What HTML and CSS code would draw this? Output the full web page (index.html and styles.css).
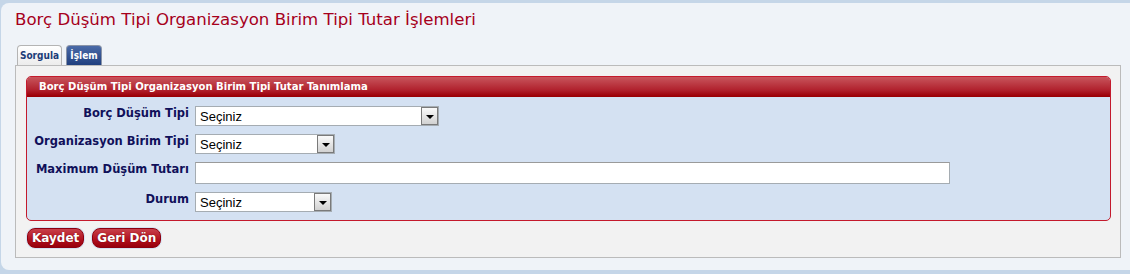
FILE: index.html
```html
<!DOCTYPE html>
<html>

<head>
    <title>Borç Düşüm Tipi Organizasyon Birim Tipi Tutar İşlemleri</title>
    <link rel="stylesheet" href="styles.css">
</head>

<body>
    <div class="page">
        <h1 class="page-title">Borç Düşüm Tipi Organizasyon Birim Tipi Tutar İşlemleri</h1>

        <div class="tabs">
            <div class="tab">Sorgula</div>
            <div class="tab tab-active">İşlem</div>
        </div>

        <div class="tab-panel">
            <div class="form-box">
                <div class="form-box-header">Borç Düşüm Tipi Organizasyon Birim Tipi Tutar Tanımlama</div>
                <div class="form-box-body">
                    <div class="form-row">
                        <label class="form-label">Borç Düşüm Tipi</label>
                        <div class="select-box select-wide">
                            <select class="select-input">
                                <option>Seçiniz</option>
                            </select>
                            <span class="select-arrow"><span class="triangle"></span></span>
                        </div>
                    </div>
                    <div class="form-row">
                        <label class="form-label">Organizasyon Birim Tipi</label>
                        <div class="select-box select-mid">
                            <select class="select-input">
                                <option>Seçiniz</option>
                            </select>
                            <span class="select-arrow"><span class="triangle"></span></span>
                        </div>
                    </div>
                    <div class="form-row">
                        <label class="form-label">Maximum Düşüm Tutarı</label>
                        <input type="text" class="text-input">
                    </div>
                    <div class="form-row">
                        <label class="form-label">Durum</label>
                        <div class="select-box select-small">
                            <select class="select-input">
                                <option>Seçiniz</option>
                            </select>
                            <span class="select-arrow"><span class="triangle"></span></span>
                        </div>
                    </div>
                </div>
            </div>

            <div class="button-bar">
                <button class="red-button">Kaydet</button>
                <button class="red-button">Geri Dön</button>
            </div>
        </div>
    </div>
</body>

</html>
```

FILE: styles.css
```css
body {
    margin: 0;
    background-color: #c5d6e8;
    font-family: "DejaVu Sans", Verdana, sans-serif;
}

.page {
    margin-top: 3px;
    margin-left: 1px;
    height: 267px;
    padding: 7px 10px 0 14px;
    background-color: #eff3f8;
    border-radius: 8px 0 0 8px;
    box-sizing: border-box;
}

.page-title {
    margin: 0;
    font-size: 16.6px;
    font-weight: normal;
    color: #a6001c;
    line-height: 20px;
}

.tabs {
    display: flex;
    gap: 4px;
    margin-top: 15px;
    margin-left: 2px;
    height: 20px;
}

.tab {
    width: 45px;
    height: 20px;
    box-sizing: border-box;
    border: 1px solid #b4b4b4;
    border-bottom: none;
    border-radius: 4px 4px 0 0;
    background: linear-gradient(#ffffff, #ececec);
    color: #1c3c78;
    font-family: "DejaVu Sans Condensed", Tahoma, sans-serif;
    font-size: 10px;
    font-weight: bold;
    text-align: center;
    line-height: 19px;
}

.tab-active {
    width: 36px;
    border-color: #8a94a8;
    background: linear-gradient(#4a6aa8, #203f7e);
    color: #ffffff;
}

.tab-panel {
    width: 1106px;
    box-sizing: border-box;
    border: 1px solid #bbbbbb;
    background-color: #f2f2f2;
    padding: 10px 9px 9px 10px;
}

.form-box {
    border: 1px solid #c41a2c;
    border-radius: 5px;
    background-color: #d4e1f2;
    overflow: hidden;
}

.form-box-header {
    height: 20px;
    padding-left: 12px;
    background: linear-gradient(#c8555c, #b0202c 70%, #9c0008);
    border-bottom: 1px solid #9a0006;
    box-sizing: border-box;
    color: #ffffff;
    font-family: "DejaVu Sans Condensed", Tahoma, sans-serif;
    font-size: 11.2px;
    font-weight: bold;
    line-height: 19px;
}

.form-box-body {
    display: flex;
    flex-direction: column;
    gap: 8px;
    padding: 9px 0 8px 0;
}

.form-row {
    display: flex;
    align-items: flex-start;
    gap: 6px;
}

.form-label {
    width: 162px;
    text-align: right;
    color: #10105a;
    font-size: 11.5px;
    font-weight: bold;
    line-height: 13px;
    padding-top: 1px;
}

.select-box {
    display: flex;
    height: 20px;
    box-sizing: border-box;
    border: 1px solid #a5acb2;
    background-color: #ffffff;
}

.select-wide {
    width: 244px;
}

.select-mid {
    width: 140px;
}

.select-small {
    width: 137px;
}

.select-input {
    flex: 1;
    min-width: 0;
    appearance: none;
    border: none;
    outline: none;
    background: transparent;
    padding: 0 0 0 4px;
    font-family: "Liberation Sans", Arial, sans-serif;
    font-size: 13px;
    color: #000000;
}

.select-arrow {
    width: 17px;
    height: 18px;
    box-sizing: border-box;
    border: 1px solid #7a7a7a;
    background: linear-gradient(#fafafa, #d2d2d2);
    display: flex;
    align-items: center;
    justify-content: center;
}

.triangle {
    width: 0;
    height: 0;
    margin-top: 2px;
    border-left: 4px solid transparent;
    border-right: 4px solid transparent;
    border-top: 4px solid #000000;
}

.text-input {
    width: 755px;
    height: 22px;
    box-sizing: border-box;
    border: 1px solid #a5acb2;
    border-top-color: #9a9a9a;
    margin: 0;
    padding: 0 4px;
    font-family: "Liberation Sans", Arial, sans-serif;
    font-size: 13px;
}

.button-bar {
    display: flex;
    gap: 8px;
    margin-top: 7px;
    padding-left: 1px;
}

.red-button {
    height: 20px;
    padding: 0 4px;
    border: 1px solid #8c0010;
    border-radius: 8px;
    background: linear-gradient(#c8404a, #b0101e 60%, #98000c);
    box-shadow: 0 0 0 1px #d4e1f2;
    color: #ffffff;
    font-family: "DejaVu Sans", Verdana, sans-serif;
    font-size: 12px;
    font-weight: bold;
    line-height: 17px;
    text-shadow: 0 0 1px #600000;
    cursor: pointer;
}
```
